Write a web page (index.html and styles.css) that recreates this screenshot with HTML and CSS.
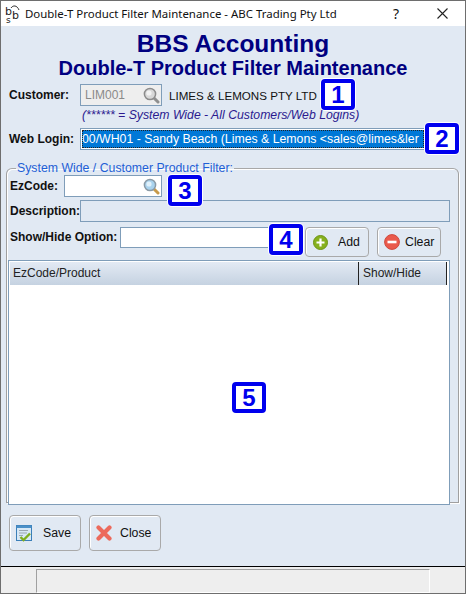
FILE: index.html
```html
<!DOCTYPE html>
<html>
  <head>
    <title>Double-T Product Filter Maintenance</title>
    <link rel="stylesheet" href="styles.css">
  </head>
  <body>
    <div class="window">
      <!-- Title Bar -->
      <div class="titlebar">
        <div class="app-icon">
          <svg width="18" height="8" viewBox="0 0 18 8"><path d="M6 3 C8 0 12 0 14 5" fill="none" stroke="#333" stroke-width="1"/></svg>
          <span class="icon-b1">b</span><span class="icon-s">s</span><span class="icon-b2">b</span>
        </div>
        <span class="title-text">Double-T Product Filter Maintenance - ABC Trading Pty Ltd</span>
        <span class="title-help">?</span>
        <svg class="title-close" width="11" height="11" viewBox="0 0 11 11"><path d="M0.5 0.5 L10.5 10.5 M10.5 0.5 L0.5 10.5" stroke="#222" stroke-width="1.1"/></svg>
      </div>

      <div class="form">
        <h1>BBS Accounting</h1>
        <h2>Double-T Product Filter Maintenance</h2>

        <!-- Customer -->
        <div class="row row-customer">
          <label class="label-customer">Customer:</label>
          <div class="field field-customer disabled">
            <span>LIM001</span>
            <svg class="lens" width="17" height="17" viewBox="0 0 17 17"><path d="M10.5 10.5 L15 15" stroke="#8f8f8f" stroke-width="3" stroke-linecap="round"/><circle cx="7" cy="7" r="5.6" fill="#d8d8d8" stroke="#8c8c8c" stroke-width="1.5"/><circle cx="6" cy="6" r="2.6" fill="#f2f2f2"/></svg>
          </div>
          <span class="customer-name">LIMES &amp; LEMONS PTY LTD</span>
          <div class="badge badge-1">1</div>
        </div>
        <p class="hint">(****** = System Wide - All Customers/Web Logins)</p>

        <!-- Web Login -->
        <div class="row row-login">
          <label class="label-customer">Web Login:</label>
          <div class="field field-login"><span class="selected">00/WH01 - Sandy Beach (Limes &amp; Lemons &lt;sales@limes&amp;ler</span></div>
          <div class="badge badge-2">2</div>
        </div>

        <!-- Product Filter Group -->
        <fieldset class="group">
          <legend>System Wide / Customer Product Filter:</legend>

          <div class="row row-ezcode">
            <label class="label-ezcode">EzCode:</label>
            <div class="field field-ezcode">
              <svg class="lens" width="17" height="17" viewBox="0 0 17 17"><path d="M10.5 10.5 L15 15" stroke="#c79a4a" stroke-width="3" stroke-linecap="round"/><circle cx="7" cy="7" r="5.6" fill="#a9d3ee" stroke="#8a9aa6" stroke-width="1.5"/><circle cx="6" cy="6" r="2.6" fill="#e0f1fb"/></svg>
            </div>
            <div class="badge badge-3">3</div>
          </div>

          <div class="row row-desc">
            <label class="label-desc">Description:</label>
            <div class="field field-desc"></div>
          </div>

          <div class="row row-option">
            <label class="label-option">Show/Hide Option:</label>
            <div class="field field-option"></div>
            <div class="badge badge-4">4</div>
            <button class="btn btn-add">
              <svg width="15" height="15" viewBox="0 0 15 15"><circle cx="7.5" cy="7.5" r="7" fill="#86b01e" stroke="#6d9415"/><path d="M7.5 3.5 V11.5 M3.5 7.5 H11.5" stroke="#fff" stroke-width="2.2"/></svg>
              <span>Add</span>
            </button>
            <button class="btn btn-clear">
              <svg width="16" height="16" viewBox="0 0 16 16"><circle cx="8" cy="8" r="7.4" fill="#ea5a4c" stroke="#cf4a3e"/><path d="M3.5 8 H12.5" stroke="#fff" stroke-width="2.6"/></svg>
              <span>Clear</span>
            </button>
          </div>

          <!-- Product Grid -->
          <div class="grid">
            <div class="grid-head">
              <div class="col-product">EzCode/Product</div>
              <div class="col-show">Show/Hide</div>
            </div>
            <div class="grid-body">
              <div class="badge badge-5">5</div>
            </div>
          </div>
        </fieldset>

        <!-- Footer Buttons -->
        <div class="actions">
          <button class="btn btn-big">
            <svg width="16" height="17" viewBox="0 0 16 17"><rect x="0.5" y="0.5" width="15" height="15" fill="#d7e8f6" stroke="#3b7fb8"/><rect x="0.5" y="0.5" width="15" height="2.5" fill="#4b90c8"/><path d="M3 5.5 H12 M3 8 H11 M3 10.5 H7" stroke="#9aa7b3"/><path d="M4.5 12 L7.5 15 L14 8.5" fill="none" stroke="#7fae1f" stroke-width="2.4"/></svg>
            <span>Save</span>
          </button>
          <button class="btn btn-big btn-close">
            <svg width="16" height="16" viewBox="0 0 16 16"><path d="M2.5 2.5 L13.5 13.5 M13.5 2.5 L2.5 13.5" stroke="#ec6a5c" stroke-width="4.2" stroke-linecap="round"/></svg>
            <span>Close</span>
          </button>
        </div>
      </div>

      <!-- Status Bar -->
      <div class="statusbar">
        <div class="panel-first"></div>
        <div class="panel-mid"></div>
      </div>
    </div>
  </body>
</html>
```
FILE: styles.css
```css
body {
  font-family: "Liberation Sans", Arial, sans-serif;
  font-size: 12px;
  margin: 0;
  padding: 0;
  background-color: #e1e9f3;
}

.window {
  width: 466px;
  height: 594px;
  box-sizing: border-box;
  border: 1px solid #6e6e6e;
  display: flex;
  flex-direction: column;
  overflow: hidden;
}

/* Title Bar */
.titlebar {
  height: 25px;
  flex-shrink: 0;
  background-color: #fff;
  display: flex;
  align-items: center;
  position: relative;
  font-family: "Noto Sans", "Open Sans", sans-serif;
  font-size: 11.45px;
  color: #111;
}

.app-icon {
  width: 18px;
  height: 18px;
  margin-left: 4px;
  position: relative;
  font-family: "DejaVu Sans", sans-serif;
  font-size: 11px;
  line-height: 9px;
  color: #222;
}

.app-icon svg {
  position: absolute;
  top: 0;
  left: 0;
}

.icon-b1,
.icon-s,
.icon-b2 {
  position: absolute;
}

.icon-b1 {
  left: 0;
  top: 2px;
}

.icon-s {
  left: 1px;
  top: 11px;
  font-size: 9px;
}

.icon-b2 {
  left: 7px;
  top: 6px;
}

.title-text {
  margin-left: 2px;
  white-space: nowrap;
}

.title-help {
  position: absolute;
  left: 392px;
  top: 3px;
  font-size: 14px;
}

.title-close {
  position: absolute;
  left: 436px;
  top: 7px;
}

.form {
  flex: 1;
  background-color: #e1e9f3;
  border-bottom: 1px solid #000;
  padding: 4px 0 0 0;
  position: relative;
}

h1 {
  margin: 0;
  text-align: center;
  font-size: 24.5px;
  line-height: 27px;
  color: #000080;
}

h2 {
  margin: 0;
  text-align: center;
  font-size: 20px;
  line-height: 22px;
  color: #000080;
}

.row {
  display: flex;
  align-items: center;
  position: relative;
}

label {
  font-weight: bold;
  color: #111;
  white-space: nowrap;
}

.field {
  height: 22px;
  box-sizing: border-box;
  border: 1px solid #7f9db9;
  background-color: #fff;
  position: relative;
  display: flex;
  align-items: center;
}

.lens {
  position: absolute;
  right: 1px;
  top: 2px;
}

.label-customer {
  width: 71px;
  margin-left: 8px;
}

.row-customer {
  margin-top: 5px;
}

.field-customer {
  width: 82px;
  padding-left: 4px;
  background-color: #eeeeee;
  color: #8a8a8a;
}

.customer-name {
  margin-left: 7px;
  font-size: 11.6px;
  color: #111;
}

.hint {
  margin: 2px 0 0 81px;
  line-height: 14px;
  font-size: 12.25px;
  font-style: italic;
  color: #2b1a8f;
}

.row-login {
  margin-top: 6px;
}

.field-login {
  width: 378px;
  padding: 1px;
  overflow: hidden;
}

.selected {
  display: block;
  flex-shrink: 0;
  width: 342px;
  height: 18px;
  font-size: 12.3px;
  line-height: 18px;
  box-sizing: border-box;
  overflow: hidden;
  white-space: nowrap;
  background-color: #0078d7;
  color: #fff;
  outline: 1px dotted #222;
  outline-offset: -1px;
}

/* Filter Group */
.group {
  margin: 11px 0 0 5px;
  padding: 0 0 1px 1px;
  width: 453px;
  height: 342px;
  box-sizing: border-box;
  border: 1px solid #a0a0a0;
  border-top-color: #a8a8a8;
  border-radius: 6px 6px 0 0;
  box-shadow: inset 1px 1px 0 #fff, 1px 1px 0 #fff;
}

legend {
  margin-left: 8px;
  padding: 0 1px;
  font-size: 12.3px;
  color: #1f5fd6;
  line-height: 14px;
}

.row-ezcode {
  margin-top: 0;
}

.label-ezcode {
  width: 54px;
  margin-left: 2px;
}

.field-ezcode {
  width: 98px;
}

.row-desc {
  margin-top: 3px;
}

.label-desc {
  width: 70px;
  margin-left: 2px;
}

.field-desc {
  width: 370px;
  background-color: #e1e9f3;
}

.row-option {
  margin-top: 5px;
  align-items: flex-start;
}

.label-option {
  width: 110px;
  margin-left: 2px;
  line-height: 21px;
}

.field-option {
  width: 150px;
  height: 21px;
}

.btn {
  font-family: "Liberation Sans", Arial, sans-serif;
  font-size: 12.3px;
  color: #111;
  background-color: #e1e9f3;
  border: 1px solid #a9a9a9;
  border-radius: 4px;
  box-shadow: inset 1px 1px 0 #fff;
  padding: 0;
  display: flex;
  align-items: center;
}

.btn-add,
.btn-clear {
  position: relative;
  width: 64px;
  height: 30px;
}

.btn-add {
  margin-left: 35px;
  padding-left: 7px;
  gap: 10px;
}

.btn-clear {
  margin-left: 8px;
  padding-left: 6px;
  gap: 5px;
}

/* Product Grid */
.grid {
  margin: 3px 0 0 0;
  width: 442px;
  height: 245px;
  box-sizing: border-box;
  border: 1px solid #7f9db9;
  box-shadow: inset 1px 1px 0 #fff;
  background-color: #fff;
  padding: 1px;
  display: flex;
  flex-direction: column;
}

.grid-head {
  display: flex;
  height: 23px;
  flex-shrink: 0;
  width: 437px;
  background: linear-gradient(#e3eaf4, #c5d2e1);
  border-right: 1px solid #222;
  color: #222;
  line-height: 23px;
  box-sizing: border-box;
}

.col-product {
  width: 349px;
  padding-left: 3px;
  box-sizing: border-box;
  border-right: 1px solid #222;
}

.col-show {
  padding-left: 4px;
}

.grid-body {
  flex: 1;
  position: relative;
}

/* Footer Buttons */
.actions {
  display: flex;
  gap: 8px;
  margin: 12px 0 0 8px;
}

.btn-big {
  width: 72px;
  height: 36px;
  padding-left: 6px;
  gap: 11px;
}

.btn-close {
  gap: 8px;
}

/* Status Bar */
.statusbar {
  height: 26px;
  flex-shrink: 0;
  background-color: #eeeeee;
  display: flex;
}

.panel-first {
  width: 35px;
}

.panel-mid {
  width: 394px;
  margin-top: 2px;
  border-top: 1px solid #a0a0a0;
  border-left: 1px solid #a0a0a0;
  border-right: 1px solid #fff;
  border-bottom: 1px solid #fff;
  box-sizing: border-box;
}

/* Numbered Callouts */
.badge {
  position: absolute;
  z-index: 1;
  width: 34px;
  height: 31px;
  box-sizing: border-box;
  background-color: #fff;
  border: 4px solid #0000ee;
  border-radius: 4px;
  box-shadow: 0 0 0 1px #fff;
  color: #0000ee;
  font-size: 24px;
  font-weight: bold;
  line-height: 23px;
  text-align: center;
}

.badge-1 {
  left: 320px;
  top: -5px;
}

.badge-2 {
  left: 424px;
  top: -5px;
}

.badge-3 {
  left: 160px;
  top: 0;
}

.badge-4 {
  left: 261px;
  top: -3px;
}

.badge-5 {
  left: 222px;
  top: 97px;
}
```
